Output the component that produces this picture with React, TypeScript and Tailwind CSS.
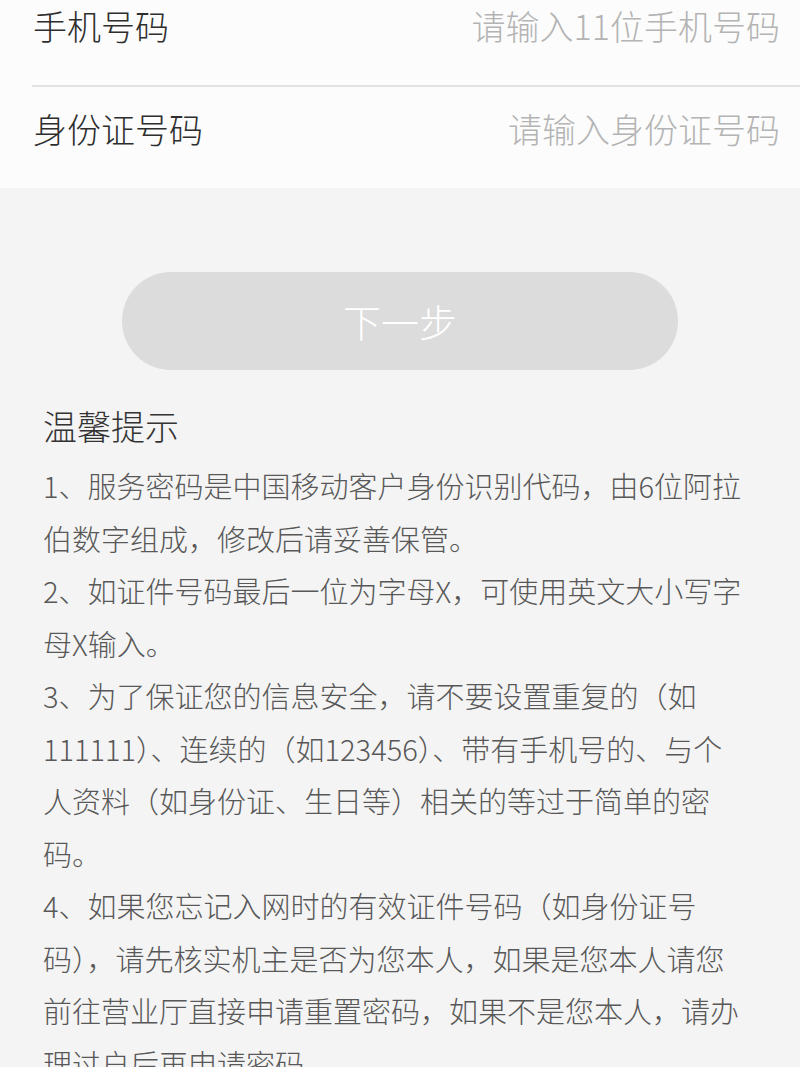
import React from "react";

const lines = [
  "1、服务密码是中国移动客户身份识别代码，由6位阿拉",
  "伯数字组成，修改后请妥善保管。",
  "2、如证件号码最后一位为字母X，可使用英文大小写字",
  "母X输入。",
  "3、为了保证您的信息安全，请不要设置重复的（如",
  "111111）、连续的（如123456）、带有手机号的、与个",
  "人资料（如身份证、生日等）相关的等过于简单的密",
  "码。",
  "4、如果您忘记入网时的有效证件号码（如身份证号",
  "码），请先核实机主是否为您本人，如果是您本人请您",
  "前往营业厅直接申请重置密码，如果不是您本人，请办",
  "理过户后再申请密码",
];

export default function App() {
  return (
    <div
      className="w-[800px] h-[1067px] overflow-hidden bg-[#f4f4f4] font-light"
      style={{ fontFamily: '"Noto Sans CJK SC", "Noto Sans", sans-serif' }}
    >
      <div className="bg-[#fcfcfc]">
        <div className="h-[85px] flex items-start justify-between pl-[33px] pr-[20px]">
          <span className="text-[34px] leading-[52px] text-[#2e2e2e]">手机号码</span>
          <span className="text-[34px] leading-[52px] text-[#b4b4b4]">请输入11位手机号码</span>
        </div>
        <div className="ml-[32px] h-[2px] bg-[#e2e2e2]" />
        <div className="h-[101px] flex items-start justify-between pl-[33px] pr-[20px]">
          <span className="text-[34px] leading-[84px] text-[#2e2e2e]">身份证号码</span>
          <span className="text-[34px] leading-[84px] text-[#b4b4b4]">请输入身份证号码</span>
        </div>
      </div>
      <div className="pt-[84px]">
        <div className="mx-[122px] h-[98px] rounded-full bg-[#dcdcdc] flex items-center justify-center">
          <span className="text-[38px] text-white leading-none">下一步</span>
        </div>
      </div>
      <div className="pl-[43px] mt-[32px]">
        <div className="text-[34px] leading-[48px] text-[#333333]">温馨提示</div>
        <div className="mt-[9px]">
          {lines.map((l, i) => (
            <div key={i} className="text-[29px] leading-[52.5px] text-[#585858] whitespace-nowrap">
              {l}
            </div>
          ))}
        </div>
      </div>
    </div>
  );
}
